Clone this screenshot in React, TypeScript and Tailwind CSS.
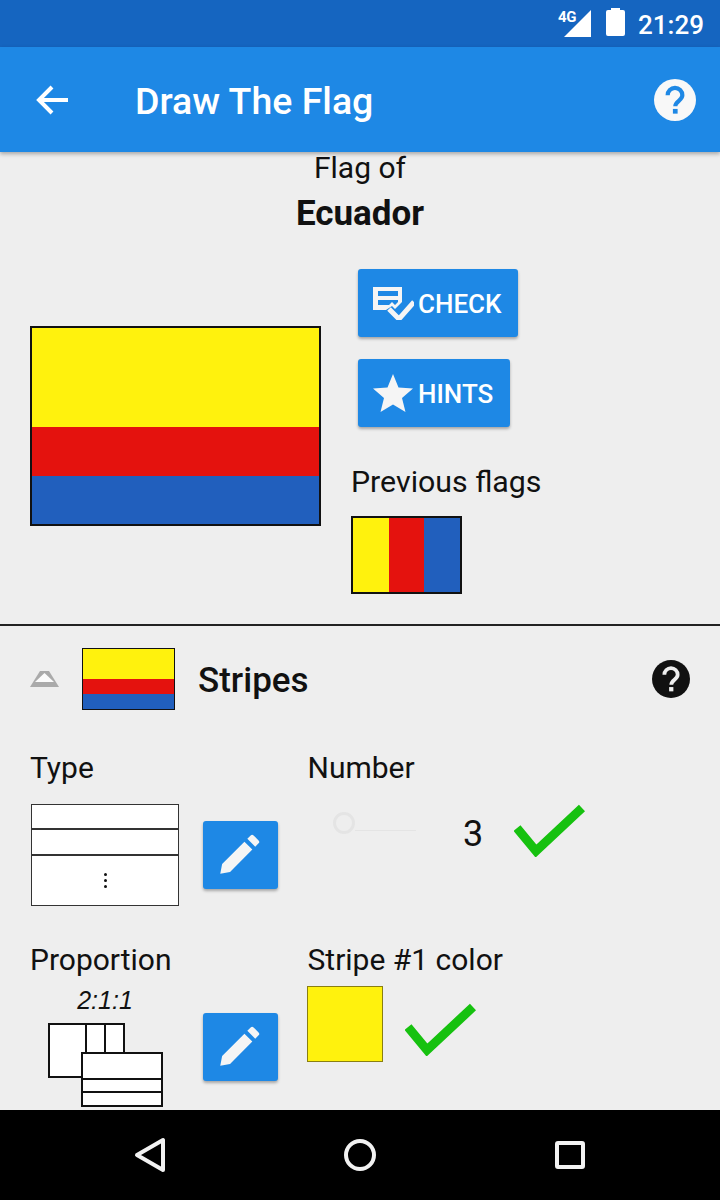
const font = { fontFamily: 'Roboto, sans-serif' };

const Pencil = () => (
  <svg viewBox="0 0 24 24" className="w-[50px] h-[50px] mr-[3px]" fill="#f5f5f5">
    <path d="M3 21l.9-4.700L14.600 5.600l3.800 3.800L7.700 20.100 3 21zM16 4.200l1.600-1.600a1 1 0 0 1 1.400 0l2.400 2.400a1 1 0 0 1 0 1.400L19.800 8 16 4.200z" />
  </svg>
);

const EditButton = () => (
  <div className="w-[75px] h-[68px] rounded-[3px] bg-[#1e88e5] shadow-[0_2px_3px_rgba(0,0,0,0.3)] flex items-center justify-center">
    <Pencil />
  </div>
);

const Tick = ({ w, h }: { w: number; h: number }) => (
  <svg viewBox="0 0 71 53" width={w} height={h}>
    <path d="M3 24 L22 47 L68 4" fill="none" stroke="#16c10f" strokeWidth="9" />
  </svg>
);

const Help = ({ size, bg, fg }: { size: number; bg: string; fg: string }) => (
  <svg viewBox="0 0 40 40" width={size} height={size}>
    <circle cx="20" cy="20" r="20" fill={bg} />
    <path d="M13 15.500a7 7 0 0 1 14 0c0 5-6.700 5.500-6.700 10.500" fill="none" stroke={fg} strokeWidth="4" />
    <rect x="18" y="28.500" width="4.500" height="4.500" fill={fg} />
  </svg>
);

const Flag = ({ className }: { className: string }) => (
  <div className={`flex flex-col border-[#111] ${className}`}>
    <div className="flex-[99] bg-[#fff20d]" />
    <div className="flex-[49] bg-[#e4120e]" />
    <div className="flex-[48] bg-[#215fbd]" />
  </div>
);

export default function App() {
  return (
    <div style={font} className="w-[720px] h-[1200px] flex flex-col bg-[#eeeeee] text-[#111]">
      <div className="h-[47px] bg-[#1565c0] flex items-center justify-end pr-[16px] text-white">
        <div className="relative w-[32px] h-[37px] mr-[15px]">
          <span className="absolute left-[-1px] top-[4px] text-[15px] font-bold leading-[16px] tracking-tight">4G</span>
          <svg viewBox="0 0 27 27" className="absolute left-[5px] top-[5px] w-[27px] h-[27px]" fill="white">
            <path d="M27 0V27H0z" />
          </svg>
        </div>
        <svg viewBox="0 0 19 28" className="w-[19px] h-[28px] mr-[13px] mt-[-3px]" fill="white">
          <path d="M5 2V0h9v2h3a2 2 0 0 1 2 2v22a2 2 0 0 1-2 2H2a2 2 0 0 1-2-2V4a2 2 0 0 1 2-2z" />
        </svg>
        <span className="text-[26px] font-medium leading-none mt-[2px]">21:29</span>
      </div>

      <div className="h-[105px] bg-[#1e88e5] shadow-[0_2px_4px_rgba(0,0,0,0.3)] z-10 flex items-center pl-[36px] pr-[24px] text-white">
        <svg viewBox="0 0 32 30" className="w-[32px] h-[30px]" fill="none" stroke="white" strokeWidth="4">
          <path d="M32 15H3M16 2 3 15l13 13" />
        </svg>
        <span className="ml-[67px] pt-[4px] flex-1 text-[37.500px] font-medium leading-none">Draw The Flag</span>
        <Help size={42} bg="#f8f8f8" fg="#1e88e5" />
      </div>

      <div className="flex-1 min-h-0 flex flex-col">
        <div className="h-[474px] border-b-2 border-[#222] flex flex-col">
          <div className="text-center text-[30px] leading-[32px]">Flag of</div>
          <div className="text-center text-[35px] font-bold leading-[38px] mt-[11px]">Ecuador</div>
          <div className="flex mt-[36px] pl-[30px]">
            <Flag className="w-[291px] h-[200px] mt-[57px] border-2" />
            <div className="ml-[30px] flex flex-col items-start">
              <div className="ml-[7px] h-[68px] w-[160px] rounded-[3px] bg-[#1e88e5] shadow-[0_2px_3px_rgba(0,0,0,0.3)] flex items-center pl-[15px] text-white text-[26px] font-medium">
                <svg viewBox="0 0 41 33" className="w-[41px] h-[33px] mr-[4px]" fill="#f5f5f5">
                  <path fillRule="evenodd" d="M0 0h29v15l-7 7-3-3-6 4H0zM5 4v5h20V4zM5 13v5h11l3-3 3 3 3-3v-2z" />
                  <path d="M16 22 26 32 41 15" fill="none" stroke="#f5f5f5" strokeWidth="5" />
                </svg>
                <span className="mt-[2px]">CHECK</span>
              </div>
              <div className="ml-[7px] mt-[22px] h-[68px] w-[152px] rounded-[3px] bg-[#1e88e5] shadow-[0_2px_3px_rgba(0,0,0,0.3)] flex items-center pl-[15px] text-white text-[26px] font-medium">
                <svg viewBox="0 0 40 38" className="w-[40px] h-[38px] mr-[5px]" fill="#f5f5f5">
                  <path d="M20 0l5.500 13.500L40 14.500 29 24l3.500 14L20 30.500 7.500 38 11 24 0 14.500l14.500-1z" />
                </svg>
                <span className="mt-[2px]">HINTS</span>
              </div>
              <div className="mt-[37px] text-[30.300px] leading-[36px]">Previous flags</div>
              <div className="mt-[16px] w-[111px] h-[78px] flex border-2 border-[#111]">
                <div className="flex-1 bg-[#fff20d]" />
                <div className="flex-1 bg-[#e4120e]" />
                <div className="flex-1 bg-[#215fbd]" />
              </div>
            </div>
          </div>
        </div>

        <div className="pl-[30px] pr-[30px] pt-[22px]">
          <div className="flex items-center h-[62px]">
            <svg viewBox="0 0 29 18" className="w-[29px] h-[18px] blur-[0.5px]">
              <path d="M10 1h9L29 17H0z" fill="#aaaaaa" />
              <path d="M14.500 3 24 12H5z" fill="#fbfbfb" />
            </svg>
            <Flag className="ml-[23px] w-[93px] h-[62px] border" />
            <span className="ml-[23px] pt-[3px] flex-1 text-[35px] font-medium leading-none">Stripes</span>
            <Help size={38} bg="#111" fg="#eee" />
          </div>

          <div className="flex mt-[40px]">
            <div className="w-[278px]">
              <div className="text-[30px] leading-[36px]">Type</div>
              <div className="flex items-start mt-[18px]">
                <div className="ml-[1px] w-[148px] h-[102px] bg-white border border-[#333] flex flex-col">
                  <div className="h-[25px] border-b-2 border-[#333]" />
                  <div className="h-[26px] border-b-2 border-[#333]" />
                  <div className="flex-1 flex flex-col items-center justify-center gap-[3px]">
                    <div className="w-[3px] h-[3px] rounded-full bg-[#111]" />
                    <div className="w-[3px] h-[3px] rounded-full bg-[#111]" />
                    <div className="w-[3px] h-[3px] rounded-full bg-[#111]" />
                  </div>
                </div>
                <div className="ml-[24px] mt-[17px]">
                  <EditButton />
                </div>
              </div>
            </div>
            <div className="ml-[-1px]">
              <div className="text-[30px] leading-[36px] pl-[0.5px]">Number</div>
              <div className="flex items-start">
                <div className="relative w-[135px] h-[40px] mt-[24px] ml-[24px]">
                  <div className="absolute left-[2px] top-[2px] w-[22px] h-[22px] rounded-full border-[3px] border-[#e4e4e4]" />
                  <div className="absolute left-[24px] w-[61px] top-[20px] h-px bg-[#e4e4e4]" />
                </div>
                <span className="ml-[-3px] mt-[28px] text-[36px] leading-[40px]">3</span>
                <div className="ml-[31px] mt-[18px]">
                  <Tick w={71} h={53} />
                </div>
              </div>
            </div>
          </div>

          <div className="flex mt-[36px]">
            <div className="w-[278px]">
              <div className="text-[30px] leading-[36px]">Proportion</div>
              <div className="flex items-start">
                <div className="w-[149px] flex flex-col items-center">
                  <div className="text-[25px] italic leading-[28px] mt-[8px] ml-[1px]" style={{ fontFamily: '"Liberation Sans", sans-serif' }}>2:1:1</div>
                  <svg viewBox="0 0 116 84" className="w-[116px] h-[84px] mt-[9px] ml-[3px]">
                    <g fill="white" stroke="#111" strokeWidth="2">
                      <rect x="1" y="1" width="75" height="53" />
                      <path d="M38 1v53M57 1v53" />
                      <rect x="34" y="30" width="80" height="53" />
                      <path d="M34 56h80M34 69h80" />
                    </g>
                  </svg>
                </div>
                <div className="ml-[24px] mt-[17px] pt-[18px]">
                  <EditButton />
                </div>
              </div>
            </div>
            <div className="ml-[-1px]">
              <div className="text-[30px] leading-[36px] pl-[0.5px]">Stripe #1 color</div>
              <div className="flex items-start mt-[8px]">
                <div className="w-[76px] h-[76px] bg-[#fff20d] border border-[#8a7f10]" />
                <div className="ml-[22px] mt-[17px]">
                  <Tick w={71} h={53} />
                </div>
              </div>
            </div>
          </div>
        </div>
      </div>

      <div className="h-[90px] bg-black flex items-center justify-between pl-[134px] pr-[135px]">
        <svg viewBox="0 0 32 36" className="w-[32px] h-[36px]" fill="none" stroke="#f2f2f2" strokeWidth="4">
          <path d="M29 3v30L3 18z" strokeLinejoin="round" />
        </svg>
        <svg viewBox="0 0 32 32" className="w-[32px] h-[32px] mr-[2px]" fill="none" stroke="#f2f2f2" strokeWidth="4">
          <circle cx="16" cy="16" r="14" />
        </svg>
        <svg viewBox="0 0 30 28" className="w-[30px] h-[28px]" fill="none" stroke="#f2f2f2" strokeWidth="4">
          <rect x="2" y="2" width="26" height="24" rx="1" />
        </svg>
      </div>
    </div>
  );
}
